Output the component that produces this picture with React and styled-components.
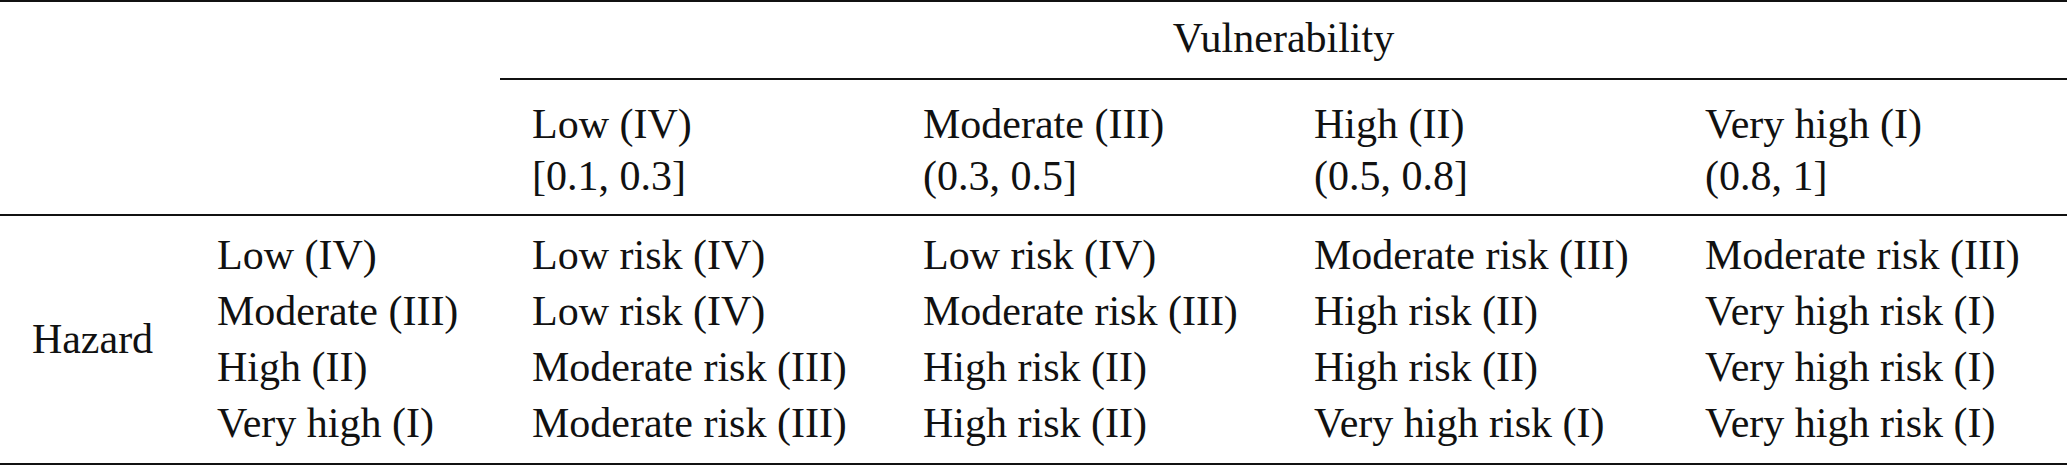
import React from "react";
import styled, { createGlobalStyle, css } from "styled-components";

const SERIF = `"Liberation Serif", "Times New Roman", serif`;
const INK = "#111111";
const RULE = `2px solid ${INK}`;

const GlobalStyle = createGlobalStyle`
  html, body {
    margin: 0;
    padding: 0;
    background: #ffffff;
  }
`;

const columns = [
  { label: "Low (IV)", range: "[0.1, 0.3]" },
  { label: "Moderate (III)", range: "(0.3, 0.5]" },
  { label: "High (II)", range: "(0.5, 0.8]" },
  { label: "Very high (I)", range: "(0.8, 1]" },
];

const rows = [
  {
    hazard: "Low (IV)",
    risks: ["Low risk (IV)", "Low risk (IV)", "Moderate risk (III)", "Moderate risk (III)"],
  },
  {
    hazard: "Moderate (III)",
    risks: ["Low risk (IV)", "Moderate risk (III)", "High risk (II)", "Very high risk (I)"],
  },
  {
    hazard: "High (II)",
    risks: ["Moderate risk (III)", "High risk (II)", "High risk (II)", "Very high risk (I)"],
  },
  {
    hazard: "Very high (I)",
    risks: ["Moderate risk (III)", "High risk (II)", "Very high risk (I)", "Very high risk (I)"],
  },
];

// font family comes through a prop so every text part can share one stack
const text = css`
  font-family: ${({ $font = SERIF }) => $font};
  font-size: 42px;
  color: ${INK};
  white-space: nowrap;
`;

const Matrix = styled.div`
  width: 2067px;
  border-top: ${RULE};
  border-bottom: ${RULE};
  ${text}
`;

const Head = styled.div`
  display: grid;
  grid-template-columns: 500px 1fr;
  border-bottom: ${RULE};
`;

const HeadRight = styled.div`
  grid-column: 2;
  display: flex;
  flex-direction: column;
`;

const GroupTitle = styled.div`
  ${text}
  line-height: 55px;
  text-align: center;
  padding: 9px 0 12px;
  border-bottom: ${RULE};
`;

const ColHeads = styled.div`
  display: grid;
  grid-template-columns: repeat(3, 391px) 1fr;
  padding: 18px 0 12px;
`;

const ColHead = styled.div`
  ${text}
  display: flex;
  flex-direction: column;
  line-height: 52px;
  padding-left: 32px;
`;

const Body = styled.div`
  display: grid;
  grid-template-columns: 185px 315px repeat(3, 391px) 1fr;
  grid-auto-rows: 56px;
  padding: 11px 0 12px;
`;

const HazardLabel = styled.div`
  ${text}
  grid-column: 1;
  grid-row: 1 / span 4;
  align-self: center;
  text-align: center;
  line-height: 56px;
`;

const Cell = styled.div`
  ${text}
  grid-column: ${({ $col }) => $col};
  line-height: 56px;
  padding-left: 32px;
`;

export default function App() {
  return (
    <>
      <GlobalStyle />
      <Matrix $font={SERIF}>
        <Head>
          <HeadRight>
            <GroupTitle $font={SERIF}>Vulnerability</GroupTitle>
            <ColHeads>
              {columns.map((c) => (
                <ColHead key={c.label} $font={SERIF}>
                  <span>{c.label}</span>
                  <span>{c.range}</span>
                </ColHead>
              ))}
            </ColHeads>
          </HeadRight>
        </Head>
        <Body>
          <HazardLabel $font={SERIF}>Hazard</HazardLabel>
          {rows.map((r) => (
            <React.Fragment key={r.hazard}>
              <Cell $col={2} $font={SERIF}>
                {r.hazard}
              </Cell>
              {r.risks.map((risk, j) => (
                <Cell key={j} $col={j + 3} $font={SERIF}>
                  {risk}
                </Cell>
              ))}
            </React.Fragment>
          ))}
        </Body>
      </Matrix>
    </>
  );
}
